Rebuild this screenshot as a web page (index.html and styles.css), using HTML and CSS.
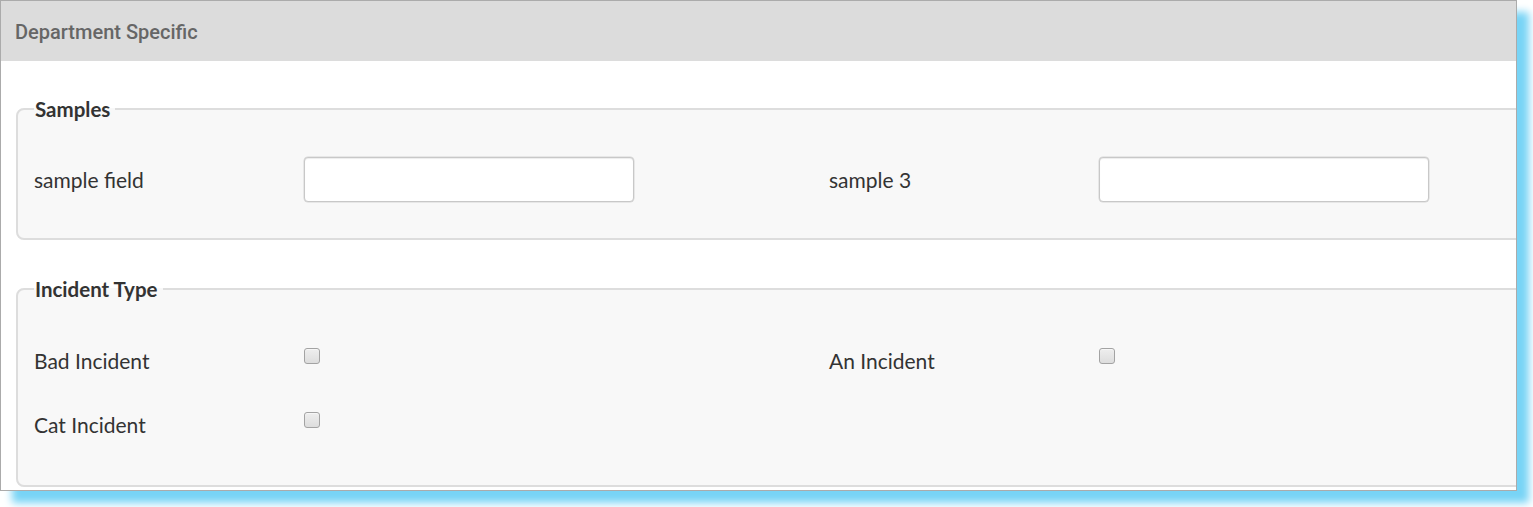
FILE: index.html
```html
<!DOCTYPE html>
<html>
<head>
<meta charset="utf-8">
<link rel="stylesheet" href="styles.css">
</head>
<body>
<div class="frame">
  <div class="panel-heading">Department Specific</div>
  <div class="panel-body">
    <fieldset class="group">
      <legend>Samples</legend>
      <div class="grid">
        <div class="field">
          <label class="field-label">sample field</label>
          <div class="field-control"><input class="text-input" type="text"></div>
        </div>
        <div class="field">
          <label class="field-label">sample 3</label>
          <div class="field-control"><input class="text-input" type="text"></div>
        </div>
      </div>
    </fieldset>
    <fieldset class="group group-second">
      <legend>Incident Type</legend>
      <div class="grid">
        <div class="field">
          <label class="field-label">Bad Incident</label>
          <div class="field-control check"><input class="checkbox" type="checkbox"></div>
        </div>
        <div class="field">
          <label class="field-label">An Incident</label>
          <div class="field-control check"><input class="checkbox" type="checkbox"></div>
        </div>
        <div class="field">
          <label class="field-label">Cat Incident</label>
          <div class="field-control check"><input class="checkbox" type="checkbox"></div>
        </div>
      </div>
    </fieldset>
  </div>
</div>
</body>
</html>
```

FILE: styles.css
```css
html, body {
  margin: 0;
  padding: 0;
  background: #ffffff;
}

body {
  min-height: 507px;
  box-sizing: border-box;
  padding-bottom: 16px;
}

.frame {
  width: 1517px;
  height: 491px;
  box-sizing: border-box;
  border: 1px solid #ababab;
  overflow: hidden;
  background: #ffffff;
  box-shadow: 12px 12px 8px #78d4f6;
}

.panel-heading {
  height: 60px;
  box-sizing: border-box;
  background: #dcdcdc;
  padding-left: 14px;
  display: flex;
  align-items: center;
  font-family: Roboto, "Noto Sans", sans-serif;
  font-weight: 500;
  font-size: 20px;
  color: #666666;
  padding-top: 1px;
}

.panel-body {
  padding-left: 15px;
  width: 1700px;
}

.group {
  margin: 36px 0 0 0;
  padding: 0 17px 36px 16px;
  border: 2px solid #dddddd;
  border-radius: 8px;
  background: #f8f8f8;
  min-width: 0;
  width: 1640px;
  box-sizing: border-box;
  font-family: Lato, "Open Sans", sans-serif;
  color: #333333;
}

.group-second {
  margin-top: 37px;
  padding-bottom: 38px;
}

.group legend {
  padding: 0 5px 0 1px;
  font-family: Lato, sans-serif;
  font-weight: 700;
  font-size: 20.5px;
  line-height: 24px;
  color: #333333;
}

.grid {
  margin-top: 36px;
  display: grid;
  grid-template-columns: 795px 795px;
  row-gap: 19px;
}

.group-second .grid {
  margin-top: 37px;
}

.field {
  display: flex;
  height: 45px;
}

.field-label {
  width: 270px;
  flex: none;
  font-size: 21px;
  line-height: 45px;
  color: #333333;
}

.field-control {
  flex: 1;
}

.text-input {
  display: block;
  margin: 0;
  width: 330px;
  height: 45px;
  box-sizing: border-box;
  border: 1px solid #c8c8c8;
  border-radius: 4px;
  background: #ffffff;
  box-shadow: inset 0 1px 1px rgba(0, 0, 0, 0.075), 0 0 0 0.5px #d6d6d6;
}

.check {
  padding-top: 10px;
}

.checkbox {
  -webkit-appearance: none;
  appearance: none;
  display: block;
  margin: 0;
  width: 16px;
  height: 16px;
  box-sizing: border-box;
  border: 1px solid #a3a3a3;
  border-radius: 3px;
  background: linear-gradient(#eeeeee, #dddddd);
  box-shadow: inset 0 1px 0 #f6f6f6;
}
```
